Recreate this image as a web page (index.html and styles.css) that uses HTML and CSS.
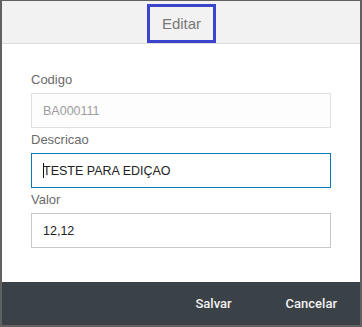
FILE: index.html
```html
<!DOCTYPE html>
<html lang="pt">
<head>
<meta charset="utf-8">
<title>Editar</title>
<link rel="stylesheet" href="styles.css">
</head>
<body>
<div class="dialog">
  <div class="header">
    <div class="title">Editar</div>
  </div>
  <div class="content">
    <div class="field">
      <div class="label">Codigo</div>
      <div class="box box-disabled">BA000111</div>
    </div>
    <div class="field">
      <div class="label">Descricao</div>
      <div class="box box-focus"><span class="caret"></span>TESTE PARA EDIÇAO</div>
    </div>
    <div class="field">
      <div class="label">Valor</div>
      <div class="box">12,12</div>
    </div>
  </div>
  <div class="footer">
    <span class="btn">Salvar</span>
    <span class="btn">Cancelar</span>
  </div>
</div>
</body>
</html>
```
FILE: styles.css
```css
html, body {
  margin: 0;
  padding: 0;
}
body {
  width: 362px;
  height: 327px;
  font-family: "Liberation Sans", Arial, sans-serif;
}
.dialog {
  box-sizing: border-box;
  width: 362px;
  height: 327px;
  border-style: solid;
  border-color: #616161;
  border-width: 1px 2px 2px 2px;
  display: flex;
  flex-direction: column;
  background: #fff;
}
.header {
  height: 42px;
  flex: none;
  background: #f2f2f2;
  border-bottom: 1px solid #dddddd;
  display: flex;
  justify-content: center;
  align-items: flex-start;
}
.title {
  margin-top: 3px;
  margin-left: 1px;
  border: 3px solid #3b45cc;
  padding: 8px 12px 8px 12px;
  font-size: 15px;
  line-height: 17px;
  color: #787878;
}
.content {
  flex: 1;
  padding: 24px 29px 0 29px;
  display: flex;
  flex-direction: column;
}
.field {
  margin-top: 4px;
}
.label {
  font-size: 13px;
  line-height: 15px;
  color: #6a6a6a;
  margin-bottom: 6px;
}
.box {
  box-sizing: border-box;
  height: 35px;
  border: 1px solid #c8c8c8;
  padding: 0 11px;
  display: flex;
  align-items: center;
  font-size: 12.5px;
  color: #222;
  background: #fff;
}
.box-disabled {
  border-color: #e0e0e0;
  background: #fdfdfd;
  color: #9c9c9c;
}
.box-focus {
  border-color: #0a78bd;
}
.caret {
  display: inline-block;
  width: 1px;
  height: 15px;
  background: #111;
  margin-right: -1px;
}
.footer {
  flex: none;
  height: 43px;
  background: #3a4147;
  display: flex;
  justify-content: flex-end;
  align-items: center;
  gap: 54px;
  padding-right: 23px;
}
.btn {
  font-family: Roboto, "Liberation Sans", sans-serif;
  font-weight: 500;
  font-size: 13px;
  color: #f2f2f2;
  line-height: 15px;
}
```
